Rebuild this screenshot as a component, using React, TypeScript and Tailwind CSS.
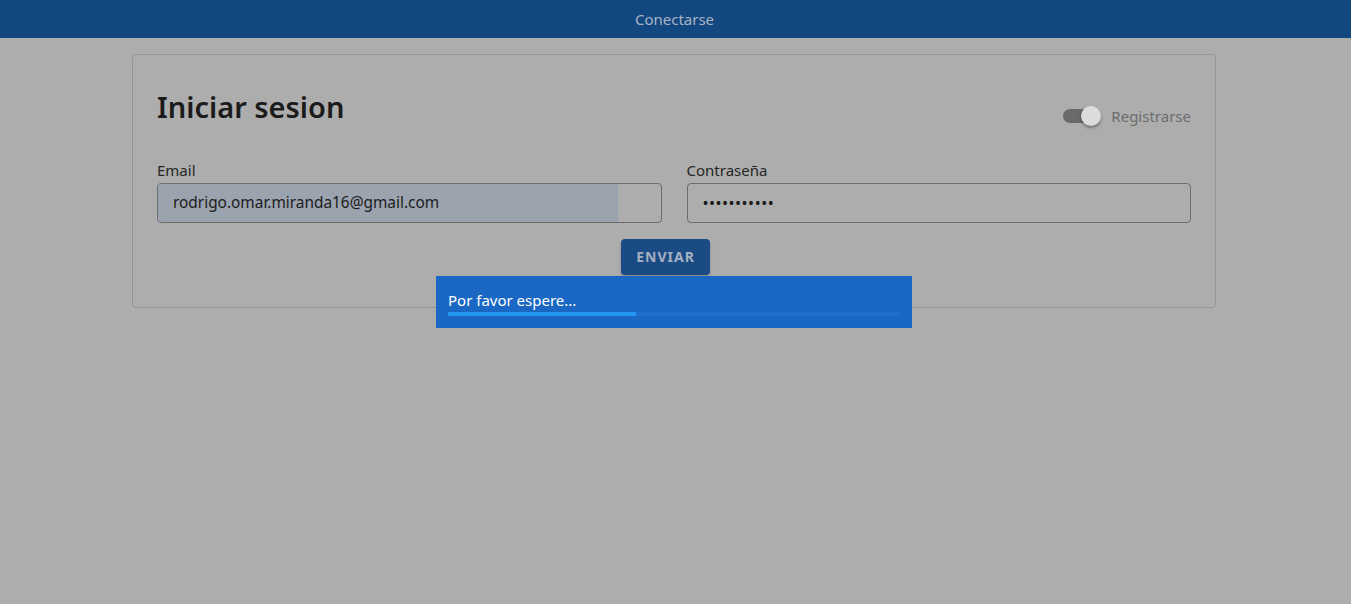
export default function App() {
  return (
    <div className="relative min-h-[604px] w-full bg-[#adadad] font-['Noto_Sans',sans-serif]">
      {/* Barra superior */}
      <header className="h-[38px] w-full bg-[#12477f] flex items-center justify-center pr-[2px]">
        <span className="text-[15px] text-[#a9b5c5]">Conectarse</span>
      </header>

      <div className="pl-[132px] pt-4">
        <div className="w-[1084px] border border-[#959595] rounded-[4px] px-6 pt-8 pb-8">
          <div className="flex items-start justify-between">
            <h1 className="text-[29px] leading-[40px] font-semibold text-[#1b1b1b]">Iniciar sesion</h1>
            <div className="flex items-center gap-[10px] mt-[18px]">
              <div className="relative w-[38px] h-[20px] flex items-center">
                <div className="w-[34px] h-[14px] rounded-full bg-[#6a6a6a]" />
                <div className="absolute right-0 top-0 w-[20px] h-[20px] rounded-full bg-[#dcdcdc] shadow-[0_2px_3px_rgba(0,0,0,0.35)]" />
              </div>
              <span className="text-[15px] text-[#6c6c6c]">Registrarse</span>
            </div>
          </div>

          <div className="grid grid-cols-2 gap-[25px] mt-[32px]">
            <div>
              <label className="block text-[15px] leading-[20px] text-[#262626]">Email</label>
              <div className="mt-[3px] h-[40px] border border-[#6d6d6d] rounded-[4px] overflow-hidden flex">
                <div className="w-[460px] h-full bg-[#9ba3ae] flex items-center pl-[15px] text-[15.4px] text-[#1c1c1c]">
                  rodrigo.omar.miranda16@gmail.com
                </div>
              </div>
            </div>
            <div>
              <label className="block text-[15px] leading-[20px] text-[#262626]">Contraseña</label>
              <div className="mt-[3px] h-[40px] border border-[#6d6d6d] rounded-[4px] flex items-center pl-[15px] text-[16px] text-[#1c1c1c] tracking-[0.5px]">
                •••••••••••
              </div>
            </div>
          </div>

          <div className="flex justify-center mt-[16px] pr-[17px]">
            <button className="h-[36px] w-[89px] rounded-[4px] bg-[#1b4b85] text-[14px] font-bold tracking-[1px] text-[#a5b1c1] shadow-[0_2px_3px_rgba(0,0,0,0.2)]">
              ENVIAR
            </button>
          </div>
        </div>
      </div>

      {/* Dialogo de carga */}
      <div className="absolute left-[436px] top-[276px] w-[476px] h-[52px] bg-[#1a68c4] px-3 pt-[14px]">
        <p className="text-[15px] leading-[20px] text-white">Por favor espere...</p>
        <div className="mt-[2px] h-[4px] w-full bg-[#1e6fcb]">
          <div className="h-full w-[188px] bg-[#2196f3]" />
        </div>
      </div>
    </div>
  )
}
